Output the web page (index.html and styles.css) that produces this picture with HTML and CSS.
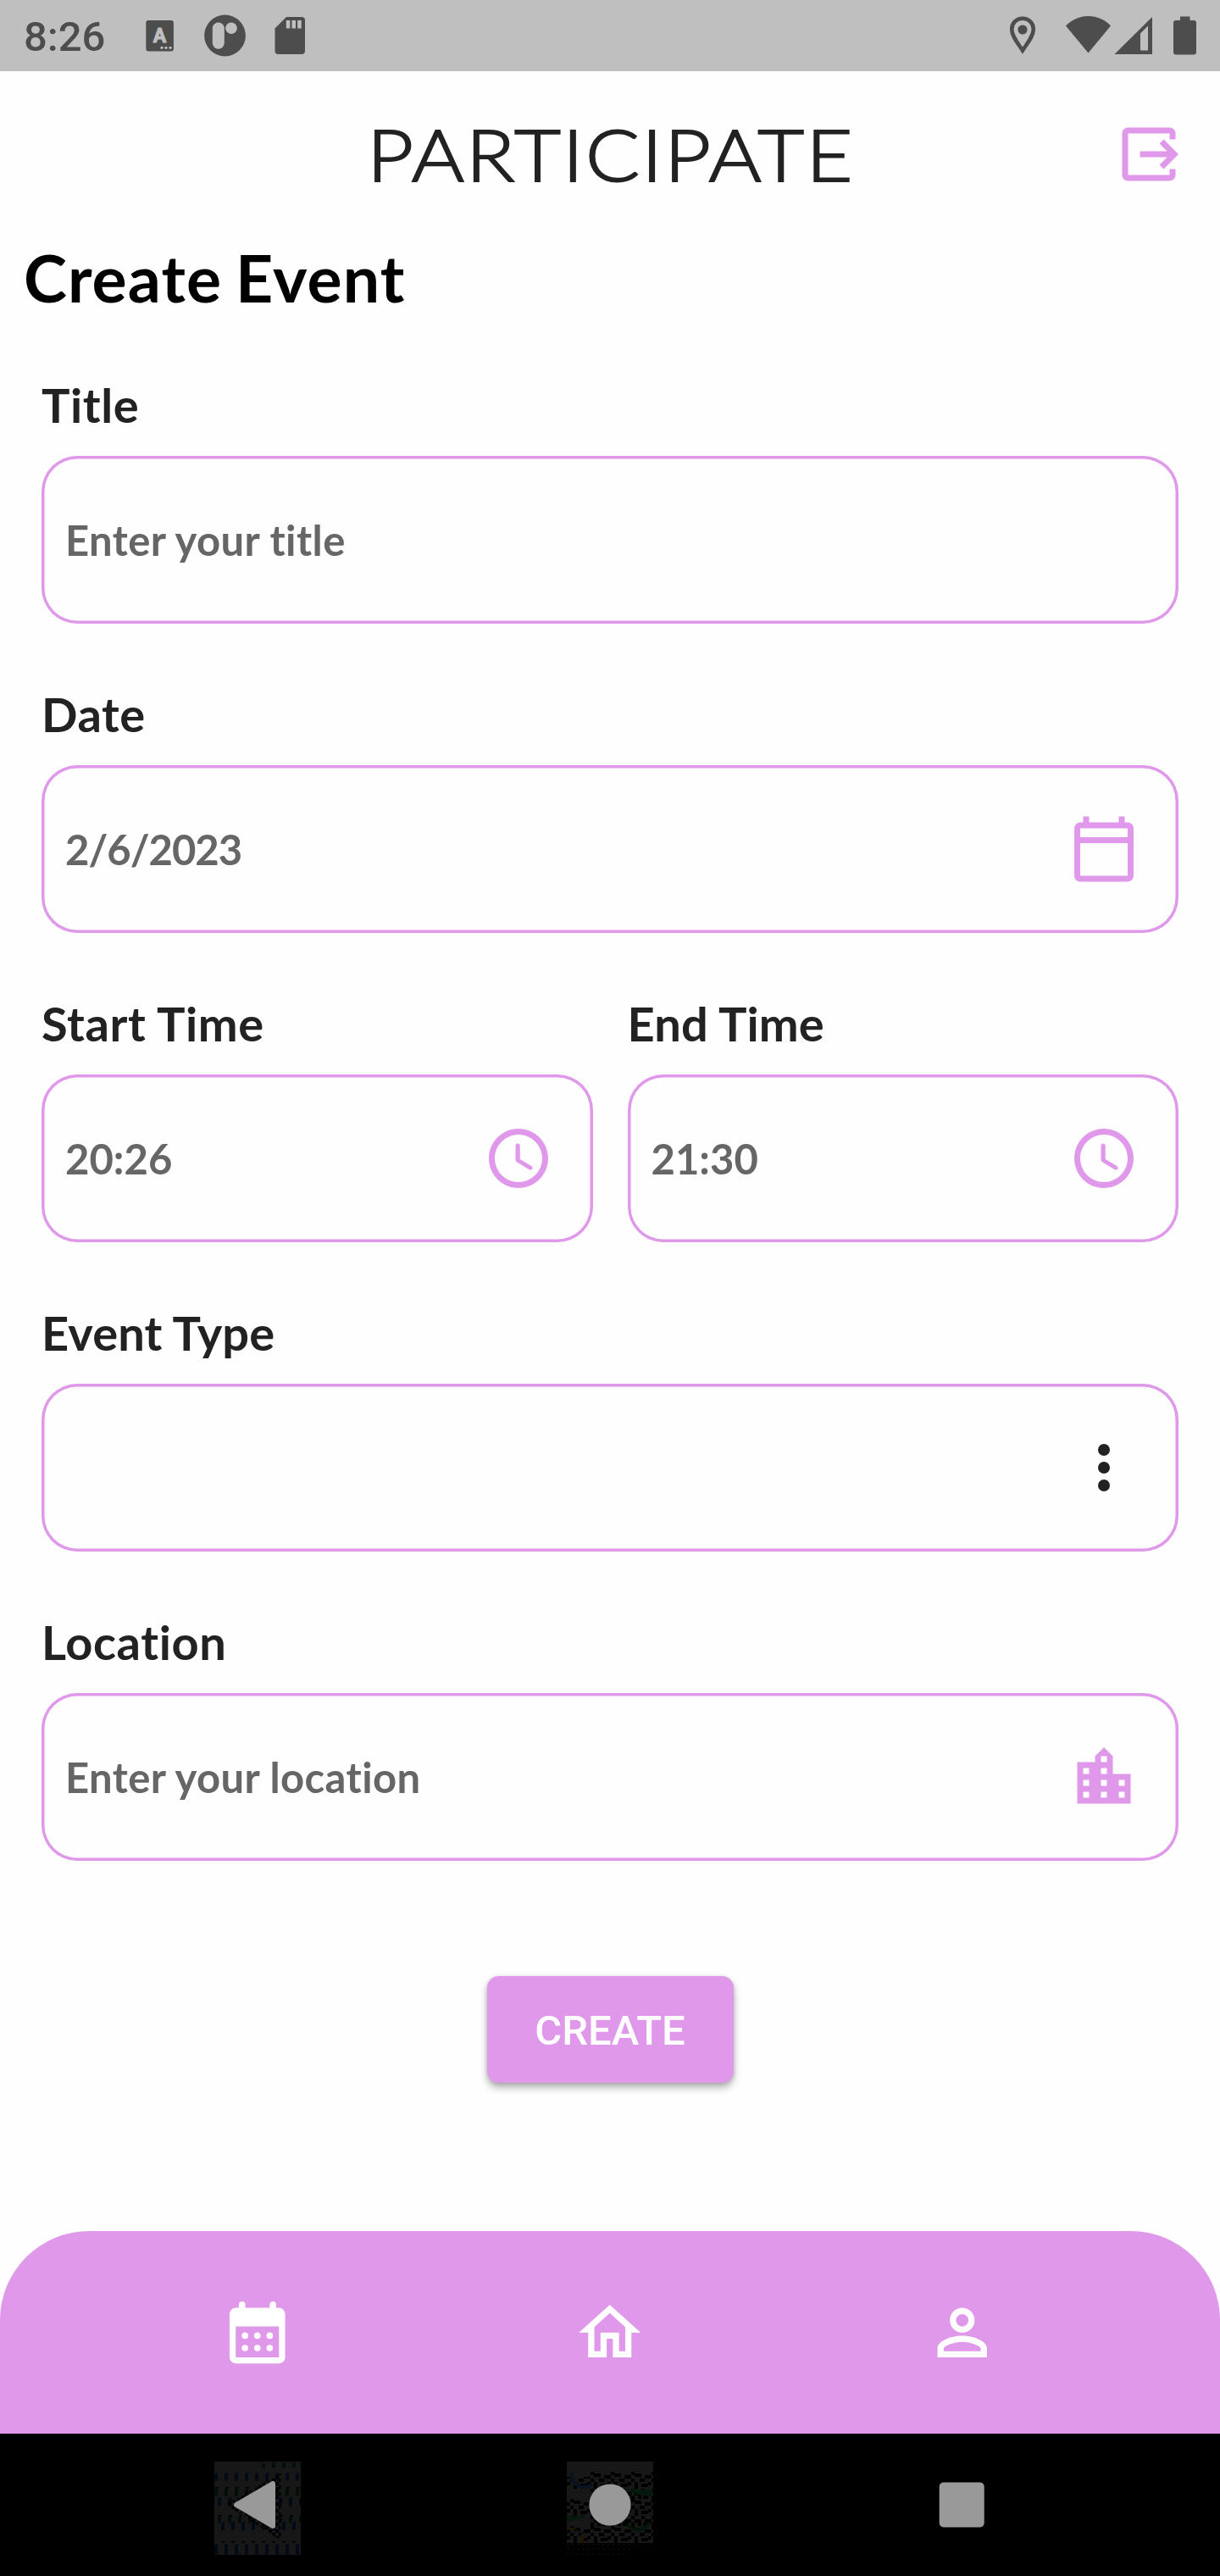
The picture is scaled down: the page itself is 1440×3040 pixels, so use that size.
FILE: index.html
```html
<!DOCTYPE html>
<html lang="en">
<head>
<meta charset="utf-8">
<title>Create Event</title>
<link rel="stylesheet" href="styles.css">
</head>
<body>
<div class="screen">
  <div class="status-bar">
    <span class="clock">8:26</span>
    <svg class="st-keyboard" width="34" height="38" viewBox="0 0 34 38">
      <rect x="0.3" y="1" width="32.6" height="36.5" rx="3" fill="#4d4d4d"/>
      <text x="16.4" y="27" text-anchor="middle" class="key-letter">A</text>
      <g fill="#bfbfbf"><circle cx="19" cy="33.3" r="1.6"/><circle cx="24" cy="33.3" r="1.6"/><circle cx="29" cy="33.3" r="1.6"/></g>
    </svg>
    <svg class="st-app" width="50" height="50" viewBox="0 0 50 50">
      <circle cx="24.5" cy="25" r="24.4" fill="#4d4d4d"/>
      <rect x="9.8" y="9.5" width="14" height="31.3" rx="7" fill="#bfbfbf"/>
      <circle cx="32" cy="16.2" r="6.8" fill="#bfbfbf"/>
    </svg>
    <svg class="st-sd" width="36" height="46" viewBox="0 0 36 46">
      <path fill="#4d4d4d" d="M14 1H32a4 4 0 0 1 4 4V41a4 4 0 0 1-4 4H4.500a4 4 0 0 1-4-4V14.500z"/>
      <path fill="#bfbfbf" d="M13.800 5h4.500v9.500h-4.500zM20.500 5H25v9.500h-4.500zM27.200 5h4.500v9.500h-4.500z"/>
    </svg>
    <span class="spacer"></span>
    <svg class="st-pin" width="32" height="46" viewBox="0 0 32 46">
      <path fill="none" stroke="#4d4d4d" stroke-width="4.600" d="M16 2.700C8.800 2.700 3.200 8.300 3.200 15.500 3.200 23.500 10 31.500 16 40.500 22 31.500 28.800 23.500 28.800 15.500 28.800 8.300 23.200 2.700 16 2.700z"/>
      <circle cx="16" cy="16" r="5.600" fill="#4d4d4d"/>
    </svg>
    <svg class="st-wifi" width="54" height="46" viewBox="0 0 54 46">
      <path fill="#4d4d4d" d="M0 12.500C7 5 16.500 1 26.500 1S46 5 53 12.500L26.500 44.500z"/>
    </svg>
    <svg class="st-signal" width="45" height="46" viewBox="0 0 45 46">
      <path fill="#4d4d4d" fill-rule="evenodd" d="M0.500 45L45 1V45zM31 20.500V40.500H40V11.500z"/>
    </svg>
    <svg class="st-battery" width="27" height="46" viewBox="0 0 27 46">
      <path fill="#4d4d4d" d="M8 .500h11.500V5H24a3 3 0 0 1 3 3V42.500a3 3 0 0 1-3 3H3a3 3 0 0 1-3-3V8a3 3 0 0 1 3-3h5z"/>
    </svg>
  </div>

  <header class="app-header">
    <div class="brand">PARTICIPATE</div>
    <svg class="logout" viewBox="0 0 24 24"><path d="M5 5h14v2h2V5c0-1.100-.9-2-2-2H5c-1.100 0-2 .9-2 2v14c0 1.100.9 2 2 2h14c1.100 0 2-.9 2-2v-2h-2v2H5z"/><path d="M17 7l-1.410 1.410L18.170 11H9v2h9.170l-2.580 2.590L17 17l5-5z"/></svg>
  </header>

  <main class="content">
    <h1 class="page-title">Create Event</h1>
    <form class="form">
      <div class="field">
        <div class="label wide">Title</div>
        <div class="box"><span>Enter your title</span></div>
      </div>
      <div class="field">
        <div class="label wide">Date</div>
        <div class="box"><span class="date">2/6/2023</span>
          <svg class="icon" viewBox="0 0 24 24"><path d="M20 3h-1V1h-2v2H7V1H5v2H4c-1.100 0-2 .9-2 2v16c0 1.100.9 2 2 2h16c1.100 0 2-.9 2-2V5c0-1.100-.9-2-2-2zm0 18H4V10h16v11zm0-13H4V5h16v3z"/></svg>
        </div>
      </div>
      <div class="row">
        <div class="field">
          <div class="label wide">Start Time</div>
          <div class="box"><span class="time">20:26</span>
            <svg class="icon" viewBox="0 0 24 24"><path d="M11.990 2C6.470 2 2 6.480 2 12s4.470 10 9.990 10C17.520 22 22 17.520 22 12S17.520 2 11.990 2zM12 20c-4.420 0-8-3.580-8-8s3.580-8 8-8 8 3.580 8 8-3.580 8-8 8z"/><path d="M11.780 7h-.06c-.4 0-.72.32-.72.72v4.720c0 .35.18.68.49.86l4.150 2.490c.34.2.78.1.98-.24.21-.34.1-.79-.25-.99l-3.870-2.300V7.720c0-.4-.32-.72-.72-.72z"/></svg>
          </div>
        </div>
        <div class="field">
          <div class="label">End Time</div>
          <div class="box"><span class="time">21:30</span>
            <svg class="icon" viewBox="0 0 24 24"><path d="M11.990 2C6.470 2 2 6.480 2 12s4.470 10 9.990 10C17.520 22 22 17.520 22 12S17.520 2 11.990 2zM12 20c-4.420 0-8-3.580-8-8s3.580-8 8-8 8 3.580 8 8-3.580 8-8 8z"/><path d="M11.780 7h-.06c-.4 0-.72.32-.72.72v4.720c0 .35.18.68.49.86l4.150 2.490c.34.2.78.1.98-.24.21-.34.1-.79-.25-.99l-3.870-2.300V7.720c0-.4-.32-.72-.72-.72z"/></svg>
          </div>
        </div>
      </div>
      <div class="field">
        <div class="label">Event Type</div>
        <div class="box"><span></span>
          <svg class="icon dark" viewBox="0 0 24 24"><circle cx="12" cy="6" r="2"/><circle cx="12" cy="12" r="2"/><circle cx="12" cy="18" r="2"/></svg>
        </div>
      </div>
      <div class="field">
        <div class="label wide">Location</div>
        <div class="box"><span>Enter your location</span>
          <svg class="icon" viewBox="0 0 24 24"><path d="M15 11V5l-3-3-3 3v2H3v14h18V11h-6zm-8 8H5v-2h2v2zm0-4H5v-2h2v2zm0-4H5V9h2v2zm6 8h-2v-2h2v2zm0-4h-2v-2h2v2zm0-4h-2V9h2v2zm0-4h-2V5h2v2zm6 12h-2v-2h2v2zm0-4h-2v-2h2v2z"/></svg>
        </div>
      </div>
      <button class="create" type="button">CREATE</button>
    </form>
  </main>

  <nav class="tabs">
    <svg class="tab" viewBox="0 0 24 24"><path fill-rule="evenodd" d="M6 4V3a1.050 1.050 0 0 1 2.100 0v1h7.900V3a1.050 1.050 0 0 1 2.100 0v1H19a2 2 0 0 1 2 2v14a2 2 0 0 1-2 2H5a2 2 0 0 1-2-2V6a2 2 0 0 1 2-2zM5 10v10h14V10z"/><circle cx="8" cy="13" r="1.050"/><circle cx="12" cy="13" r="1.050"/><circle cx="16" cy="13" r="1.050"/><circle cx="8" cy="17" r="1.050"/><circle cx="12" cy="17" r="1.050"/><circle cx="16" cy="17" r="1.050"/></svg>
    <svg class="tab" viewBox="0 0 24 24"><path d="M12 5.690l5 4.500V18h-2v-6H9v6H7v-7.810l5-4.500M12 3L2 12h3v8h6v-6h2v6h6v-8h3L12 3z"/></svg>
    <svg class="tab" viewBox="0 0 24 24"><path d="M12 6c1.100 0 2 .9 2 2s-.9 2-2 2-2-.9-2-2 .9-2 2-2m0-2C9.790 4 8 5.790 8 8s1.790 4 4 4 4-1.790 4-4-1.790-4-4-4z"/><path fill-rule="evenodd" d="M12 13C8 13 4 14.900 4 17v3h16v-3c0-2.100-4-4-8-4zM12 15c2.700 0 5.300 1.100 6 2v1H6v-1c.7-.9 3.300-2 6-2z"/></svg>
  </nav>

  <div class="system-nav">
    <svg class="key" width="102" height="110" viewBox="0 0 102 110">
      <defs>
        <pattern id="dash" width="12" height="110" patternUnits="userSpaceOnUse">
          <path fill="#020a16" d="M0 14l4-1v9l-4 1zM4 43l4-1v10l-4 1zM8 72l4-2v10l-4 2zM0 98l4-1v12l-4 1z"/>
          <path fill="#020f05" d="M0 32l4-1v9l-4 1zM4 65l4-1v8l-4 1z"/>
          <path fill="#000" d="M1 30h4v1.500h-4zM5 63h4v1.500h-4zM8 94h4v1.500h-4z"/>
        </pattern>
        <pattern id="grain" width="8" height="8" patternUnits="userSpaceOnUse">
          <path fill="#000" d="M0 0h4v4H0zM4 4h4v4H4z"/>
        </pattern>
      </defs>
      <rect width="102" height="110" fill="#171717"/>
      <rect width="102" height="110" fill="url(#dash)"/>
      <path fill="#020f05" d="M56 2h4v5h-4zM68 1h4v6h-4zM80 1h4v6h-4zM92 1h4v6h-4z"/>
      <path fill="none" stroke="url(#grain)" stroke-width="13" d="M72 25V81L26 51z"/>
      <path fill="#999" stroke="#999" stroke-width="6" stroke-linejoin="round" d="M26 51L69 26V76z"/>
    </svg>
    <svg class="key" width="102" height="110" viewBox="0 0 102 110">
      <defs>
        <pattern id="check" width="24" height="32" patternUnits="userSpaceOnUse">
          <path fill="#000" d="M4 0h4v4h-4zM16 0h4v4h-4zM0 4h4v4h-4zM8 4h8v4h-8zM20 4h4v4h-4zM4 8h4v8h-4zM12 8h4v4h-4zM18 8h6v4h-6zM0 16h4v4h-4zM8 14h8v4h-8zM20 16h4v4h-4zM4 20h4v4h-4zM14 20h6v4h-6zM0 24h4v4h-4zM8 24h4v8h-4zM16 26h8v4h-8z"/>
        </pattern>
      </defs>
      <rect width="102" height="96" fill="#171717"/>
      <rect x="28" y="12" width="74" height="84" fill="url(#check)"/>
      <rect y="18" width="28" height="14" fill="url(#check)"/>
      <rect y="44" width="28" height="22" fill="url(#check)"/>
      <rect y="76" width="28" height="20" fill="url(#check)"/>
      <path fill="none" stroke="#081221" stroke-width="4" d="M6 12v8c2 9 16 14 24 6"/>
      <path fill="#04180b" d="M70 32l32 2v7c-12 0-22-2-32-9zM0 65c8 0 15-1 23-3-4 5-13 7-23 9z"/>
      <path fill="none" stroke="#04150a" stroke-width="4" d="M72 74c4 9 18 9 26-2"/>
      <path fill="#1d1603" d="M0 78c6-1 11 0 13 3-6-1-9-1-13 0zM16 85h4v11h-4z"/>
      <path stroke="#0e0e0e" stroke-width="1.500" stroke-dasharray="2 4" d="M0 98h76M1 103h76M0 109h70"/>
      <circle cx="51" cy="51" r="24.600" fill="#999"/>
    </svg>
    <svg class="key" width="102" height="110" viewBox="0 0 102 110">
      <rect x="23.700" y="24.500" width="53" height="53" rx="5" fill="#999"/>
    </svg>
  </div>
</div>
</body>
</html>
```
FILE: styles.css
```css
* { box-sizing: border-box; }

body {
  margin: 0;
  background: #fefefe;
  font-family: Lato, "Liberation Sans", sans-serif;
  font-variant-ligatures: none;
}

svg { display: block; flex: none; }

.screen {
  width: 1440px;
  height: 3040px;
  display: flex;
  flex-direction: column;
  overflow: hidden;
}

.status-bar {
  height: 84px;
  flex: none;
  display: flex;
  align-items: flex-start;
  padding: 0 28px;
  background: #bfbfbf;
}
.clock {
  width: 144px;
  font: 500 49px/88px Roboto, sans-serif;
  color: #4d4d4d;
}
.key-letter {
  font: 700 23px Roboto, sans-serif;
  fill: #bfbfbf;
  stroke: #bfbfbf;
  stroke-width: 1;
  stroke-linejoin: round;
}
.st-keyboard { margin-top: 23px; }
.st-app { margin: 17px 0 0 35px; }
.st-sd { margin: 19px 0 0 33px; }
.spacer { flex: 1; }
.st-pin { margin-top: 19px; }
.st-wifi { margin: 18px 0 0 35px; }
.st-signal { margin: 19px 0 0 3px; }
.st-battery { margin: 19px 0 0 25px; }

.app-header {
  height: 197px;
  flex: none;
  display: grid;
  grid-template-columns: 1fr auto 1fr;
  align-items: start;
}
.brand {
  grid-column: 2;
  margin-top: 45px;
  font-size: 85px;
  line-height: 104px;
  font-weight: 300;
  letter-spacing: 2px;
  color: #222;
  -webkit-text-stroke: 1.9px #222;
  transform: translateX(1px) scaleX(1.115);
}
.logout {
  width: 84px;
  height: 84px;
  margin: 56px 42px 0 0;
  justify-self: end;
  fill: #e098ea;
}

.page-title {
  margin: 0 0 71px;
  padding-left: 28px;
  font-size: 77px;
  line-height: 92px;
  font-weight: 700;
  letter-spacing: 1.1px;
  word-spacing: -4px;
  color: #000;
}
.form {
  display: flex;
  flex-direction: column;
  gap: 73px;
  padding: 0 49px;
}
.row { display: flex; gap: 41px; }
.row .field { flex: 1; }
.label {
  height: 94px;
  font-size: 56px;
  line-height: 67px;
  font-weight: 700;
  letter-spacing: .15px;
  color: #222;
}
.label.wide { letter-spacing: .6px; }
.box {
  height: 198px;
  display: flex;
  align-items: center;
  justify-content: space-between;
  padding: 0 46px 0 28px;
  border-radius: 42px;
  box-shadow: inset 0 0 0 3.5px #e098ea;
  font-size: 49px;
  line-height: 60px;
  font-weight: 700;
  letter-spacing: .4px;
  color: #666;
}
.date { letter-spacing: -1px; }
.time { letter-spacing: 0; }
.icon { width: 84px; height: 84px; fill: #e098ea; }
.icon.dark { fill: #222; }

.create {
  align-self: center;
  width: 291px;
  height: 126px;
  margin-top: 63px;
  padding: 3px 0 0;
  border: 0;
  border-radius: 14px;
  background: #e098ea;
  box-shadow: 0 6px 10px rgba(0, 0, 0, .28), 0 1px 5px rgba(0, 0, 0, .14);
  color: #fff;
  font: 500 49px/58px Roboto, sans-serif;
}

.tabs {
  height: 239px;
  flex: none;
  margin-top: auto;
  display: flex;
  align-items: center;
  justify-content: center;
  gap: 328.5px;
  border-radius: 105px 105px 0 0;
  background: #e098ea;
}
.tab { width: 87.5px; height: 87.5px; fill: #fff; }

.system-nav {
  height: 168px;
  flex: none;
  display: flex;
  justify-content: center;
  gap: 314px;
  padding-top: 33px;
  background: #000;
}
```
